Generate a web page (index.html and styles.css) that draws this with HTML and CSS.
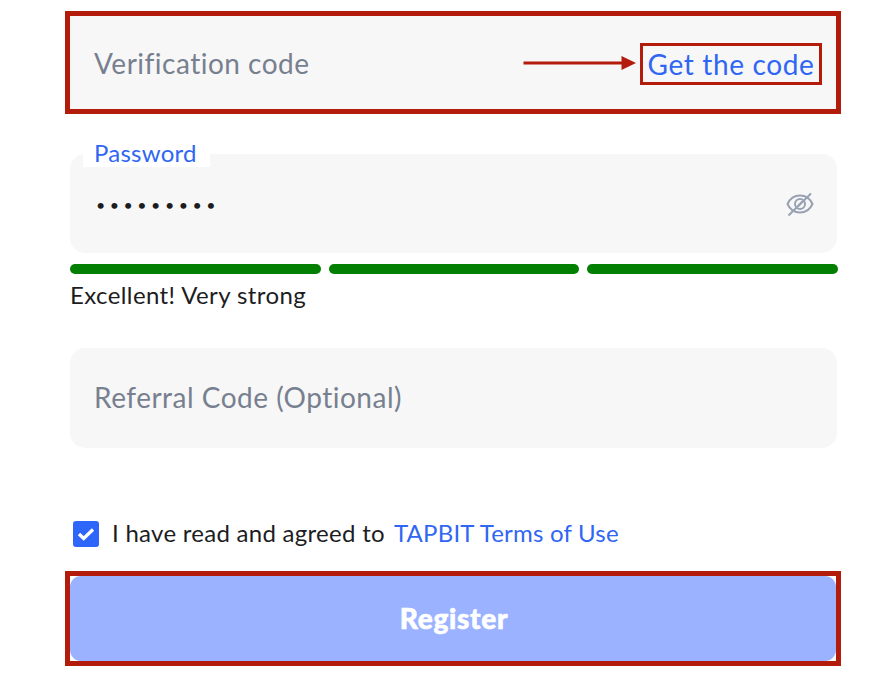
FILE: index.html
```
<!DOCTYPE html>
<html lang="en">
<head>
  <meta charset="UTF-8">
  <meta name="viewport" content="width=device-width, initial-scale=1.0">
  <title>Register</title>
  <link rel="stylesheet" href="styles.css">
</head>
<body>
  <form class="register-form">
    <div class="field highlight code-field">
      <span class="placeholder verification">Verification code</span>
      <svg class="arrow" width="114" height="16" viewBox="0 0 114 16">
        <path d="M.5 8H99" stroke="#b31b0b" stroke-width="3"/>
        <path d="M98.500 1L113 8L98.500 15Z" fill="#b31b0b"/>
      </svg>
      <a class="get-code"><span class="get-code-text">Get the code</span></a>
    </div>

    <div class="field password-field">
      <label class="floating-label"><span class="password-label">Password</span></label>
      <span class="dots">•••••••••</span>
      <svg class="eye" width="28" height="26" viewBox="0 0 28 26" fill="none" stroke="#98a2b3" stroke-width="2">
        <path d="M1.500 13C4 7.500 8.500 4.500 14 4.500S24 7.500 26.500 13C24 18.500 19.500 21.500 14 21.500S4 18.500 1.500 13Z"/>
        <circle cx="14" cy="13" r="5"/>
        <path d="M2.500 24.500L25 2.500"/>
        <path d="M12 15L16 11" stroke-linecap="round"/>
      </svg>
    </div>

    <div class="strength">
      <div class="strength-bar"></div>
      <div class="strength-bar"></div>
      <div class="strength-bar"></div>
    </div>
    <div class="strength-text"><span class="strength-message">Excellent! Very strong</span></div>

    <div class="field referral-field">
      <span class="placeholder referral">Referral Code (Optional)</span>
    </div>

    <div class="terms">
      <span class="checkbox">
        <svg width="26" height="26" viewBox="0 0 26 26" fill="none">
          <path d="M6 13L10.700 17.500L20 8.500" stroke="#fff" stroke-width="3.300"/>
        </svg>
      </span>
      <span class="terms-text">I have read and agreed to</span>
      <a class="terms-link">TAPBIT Terms of Use</a>
    </div>

    <div class="highlight submit">
      <button class="register-button" type="button"><span class="register-text">Register</span></button>
    </div>
  </form>
</body>
</html>
```
FILE: styles.css
```
* {
  box-sizing: border-box;
}

body {
  margin: 0;
  background-color: #fff;
  font-family: Lato, "Liberation Sans", sans-serif;
  color: #1d1d1f;
}

.register-form {
  width: 776px;
  margin: 11px 0 0 65px;
}

.field {
  display: flex;
  align-items: center;
  margin: 0 4px 0 5px;
  background-color: #f7f7f7;
  border-radius: 15px;
  white-space: nowrap;
}

.highlight {
  border: 5px solid #b31b0b;
}

.code-field {
  height: 103px;
  margin: 0;
  padding: 0 14px 0 24px;
  border-radius: 0;
}

.placeholder {
  color: #77808f;
  font-size: 28px;
}

.verification {
  letter-spacing: 0.5px;
}

.arrow {
  margin-left: auto;
}

.get-code {
  display: flex;
  align-items: center;
  justify-content: center;
  width: 182px;
  height: 42px;
  margin: 3px 0 0 3px;
  border: 3px solid #b31b0b;
  color: #2f66f3;
  font-size: 28px;
}

.get-code-text {
  letter-spacing: 0.65px;
}

/* Password */
.password-field {
  position: relative;
  height: 99px;
  margin-top: 40px;
  padding: 0 23px 0 25px;
}

.floating-label {
  position: absolute;
  top: -15px;
  left: 13px;
  width: 127px;
  padding-left: 11px;
  background-color: #fff;
  color: #2f66f3;
  font-size: 24px;
  line-height: 28px;
  letter-spacing: 0.25px;
}

.dots {
  padding: 1px 0 0 1px;
  font-size: 16px;
  letter-spacing: 4.5px;
}

.eye {
  margin-left: auto;
}

.strength {
  display: grid;
  grid-template-columns: repeat(3, 1fr);
  gap: 8px;
  margin: 11px 3px 0 5px;
}

.strength-bar {
  height: 10px;
  border-radius: 5px;
  background-color: #038003;
}

.strength-text {
  height: 32px;
  margin: 6px 0 0 5px;
  font-size: 24px;
  line-height: 30px;
  letter-spacing: 0.4px;
}

.referral-field {
  height: 100px;
  margin-top: 36px;
  padding: 0 0 2px 24px;
}

.referral {
  letter-spacing: 0.5px;
}

/* Terms */
.terms {
  display: flex;
  align-items: center;
  height: 32px;
  margin: 70px 0 0 8px;
  font-size: 24px;
  white-space: nowrap;
}

.checkbox {
  width: 26px;
  height: 26px;
  margin-right: 13px;
  border-radius: 3px;
  background-color: #2f66fa;
}

.checkbox svg {
  display: block;
}

.terms-text {
  padding-bottom: 3px;
  letter-spacing: 0.28px;
}

.terms-link {
  margin-left: 9px;
  padding-bottom: 3px;
  color: #2f66f3;
  letter-spacing: 0.22px;
}

.submit {
  height: 95px;
  margin-top: 21px;
}

.register-button {
  display: block;
  width: 100%;
  height: 85px;
  padding: 0 0 2px 2px;
  border: none;
  border-radius: 11px;
  background-color: #9ab2ff;
  color: #fff;
  font-family: inherit;
  font-size: 28px;
  font-weight: 900;
  letter-spacing: 0.7px;
  -webkit-text-stroke: 0.6px #fff;
}
```
